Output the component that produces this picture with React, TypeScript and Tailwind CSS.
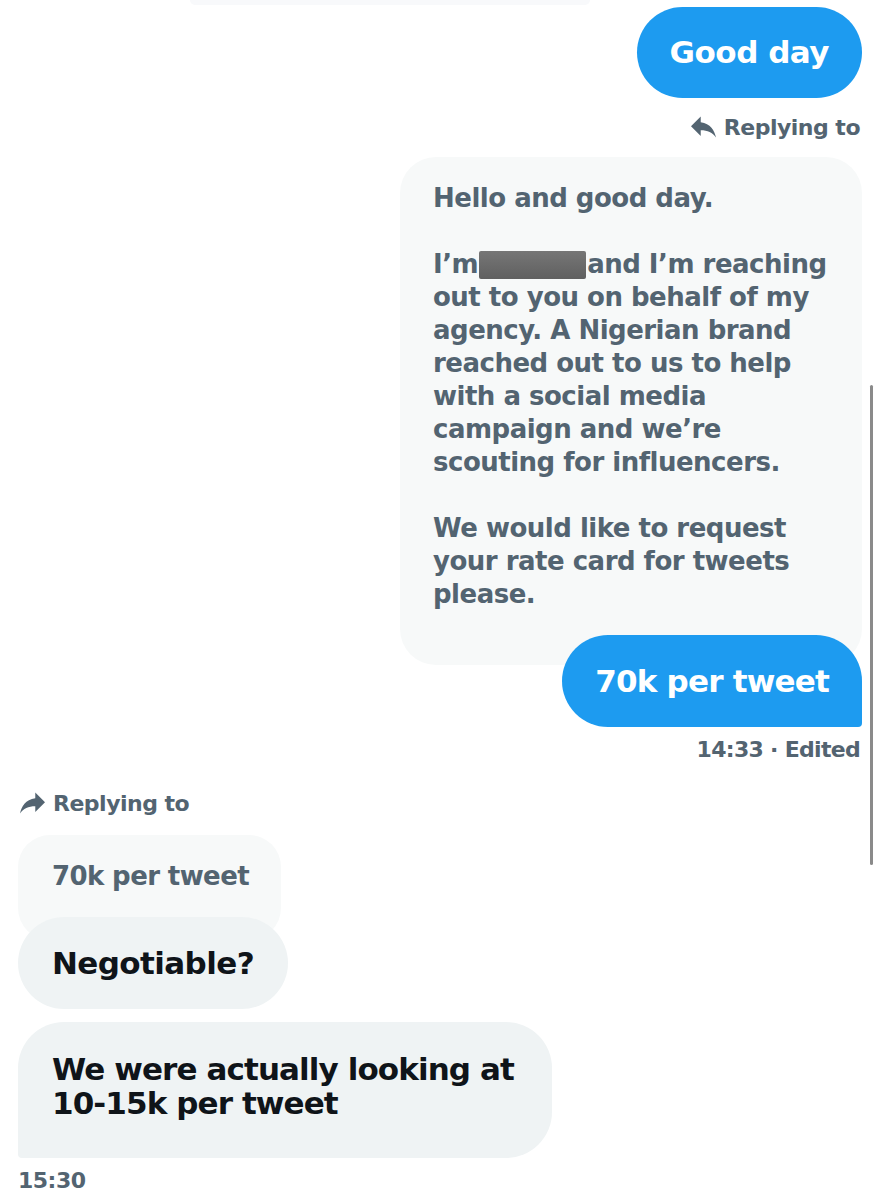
import React from 'react';

const font = { fontFamily: '"DejaVu Sans", "Open Sans", sans-serif' };

function ReplyIcon({ flip = false }: { flip?: boolean }) {
  return (
    <svg
      width="25"
      height="24"
      viewBox="3 4 18 17"
      className={flip ? '-scale-x-100' : ''}
      fill="#536471"
    >
      <path d="M10 9V5l-7 7 7 7v-4.1c5 0 8.5 1.6 11 5.1-1-5-4-10-11-11z" />
    </svg>
  );
}

const quoteLines = [
  'Hello and good day.',
  '',
  'REDACT',
  'out to you on behalf of my',
  'agency. A Nigerian brand',
  'reached out to us to help',
  'with a social media',
  'campaign and we’re',
  'scouting for influencers.',
  '',
  'We would like to request',
  'your rate card for tweets',
  'please.',
];

export default function App() {
  return (
    <div className="relative w-[880px] h-[1200px] bg-white overflow-hidden font-bold" style={font}>
      {/* leftover of the bubble above */}
      <div className="ml-[190px] w-[400px] h-[5px] bg-[#f8f9fb] rounded-b-md" />

      <div className="flex flex-col px-[18px]">
        {/* Outgoing: Good day */}
        <div className="self-end mt-[2px] h-[91px] px-[33px] flex items-center rounded-full bg-[#1d9bf0] text-white text-[31px] tracking-[-0.5px]">
          Good day
        </div>

        {/* Replying to (outgoing) */}
        <div className="self-end mt-[16px] mr-[2px] h-[26px] flex items-center gap-[8px] text-[22px] tracking-[-0.5px] text-[#536471]">
          <ReplyIcon />
          <span>Replying to</span>
        </div>

        {/* Quoted message */}
        <div className="self-end mt-[17px] w-[462px] h-[508px] rounded-[36px] bg-[#f7f9f9] pt-[25px] pl-[33px] text-[26px] leading-[33px] tracking-[-0.5px] text-[#536471]">
          {quoteLines.map((line, i) =>
            line === 'REDACT' ? (
              <div key={i} className="whitespace-nowrap flex items-center h-[33px]">
                <span>I’m</span>
                <span className="inline-block w-[107px] h-[28px] ml-[1px] mr-[1px] rounded-[2px] bg-gradient-to-b from-[#767676] to-[#606060]" />
                <span>and I’m reaching</span>
              </div>
            ) : (
              <div key={i} className="whitespace-nowrap h-[33px]">
                {line}
              </div>
            )
          )}
        </div>

        {/* Outgoing: 70k per tweet */}
        <div className="relative self-end -mt-[30px] h-[92px] px-[33px] flex items-center rounded-[46px] rounded-br-[4px] bg-[#1d9bf0] text-white text-[31px] tracking-[-0.8px]">
          70k per tweet
        </div>

        <div className="self-end mt-[9px] mr-[2px] h-[26px] flex items-center text-[22px] tracking-[-0.7px] text-[#536471]">
          14:33 · Edited
        </div>

        {/* Replying to (incoming) */}
        <div className="self-start mt-[28px] ml-[2px] h-[26px] flex items-center gap-[8px] text-[22px] tracking-[-0.5px] text-[#536471]">
          <ReplyIcon flip />
          <span>Replying to</span>
        </div>

        {/* Quoted: 70k per tweet */}
        <div className="self-start mt-[19px] w-[263px] h-[105px] rounded-[32px] bg-[#f7f9f9] pt-[25px] pl-[34px] text-[26px] leading-[33px] tracking-[-0.6px] text-[#536471]">
          70k per tweet
        </div>

        {/* Incoming: Negotiable? */}
        <div className="relative self-start -mt-[23px] h-[92px] w-[270px] px-[34px] flex items-center rounded-[46px] bg-[#eff3f4] text-[31px] tracking-[-0.6px] text-[#0f1419]">
          Negotiable?
        </div>

        {/* Incoming: We were actually... */}
        <div className="self-start mt-[13px] w-[534px] h-[136px] pt-[30px] pl-[34px] rounded-[46px] rounded-bl-[4px] bg-[#eff3f4] text-[31px] leading-[34px] tracking-[-0.9px] text-[#0f1419]">
          <div className="whitespace-nowrap">We were actually looking at</div>
          <div className="whitespace-nowrap">10-15k per tweet</div>
        </div>

        <div className="self-start mt-[9px] h-[26px] flex items-center text-[22px] tracking-[-0.5px] text-[#536471]">
          15:30
        </div>
      </div>

      {/* scrollbar */}
      <div className="absolute left-[870px] top-[385px] w-[3px] h-[480px] rounded-full bg-[#8a8a8a]" />
    </div>
  );
}
